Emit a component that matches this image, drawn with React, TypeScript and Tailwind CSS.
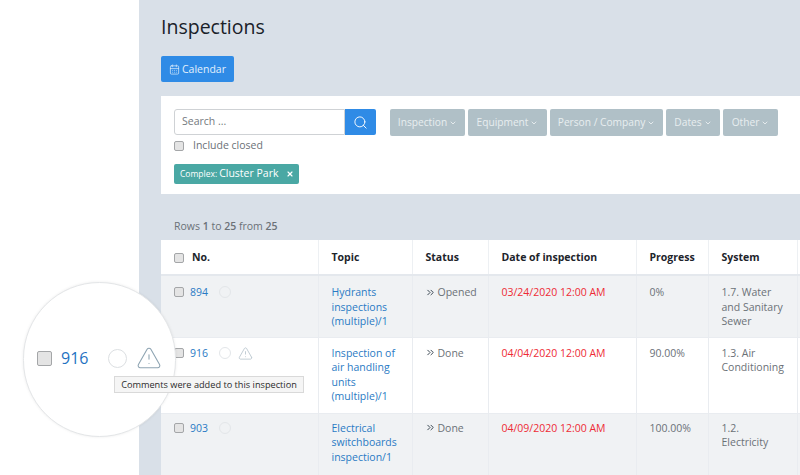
import React from 'react';
import { CalendarDays, ChevronDown, ChevronsRight, Search, TriangleAlert, X } from 'lucide-react';

const filters = [
  { label: 'Inspection', className: 'w-[75px]' },
  { label: 'Equipment', className: 'w-[79px]' },
  { label: 'Person / Company', className: 'w-[113px]' },
  { label: 'Dates', className: 'w-[54px]' },
  { label: 'Other', className: 'w-[55px]' },
];

const rows = [
  {
    no: '894',
    warn: false,
    topic: ['Hydrants', 'inspections', '(multiple)/1'],
    status: 'Opened',
    date: '03/24/2020 12:00 AM',
    progress: '0%',
    system: ['1.7. Water', 'and Sanitary', 'Sewer'],
    rowClass: 'bg-[#f0f2f4] h-[62px] [&>td]:pt-[9px]',
  },
  {
    no: '916',
    warn: true,
    topic: ['Inspection of', 'air handling', 'units', '(multiple)/1'],
    status: 'Done',
    date: '04/04/2020 12:00 AM',
    progress: '90.00%',
    system: ['1.3. Air', 'Conditioning'],
    rowClass: 'bg-white h-[76px] [&>td]:pt-[8px]',
  },
  {
    no: '903',
    warn: false,
    topic: ['Electrical', 'switchboards', 'inspection/1'],
    status: 'Done',
    date: '04/09/2020 12:00 AM',
    progress: '100.00%',
    system: ['1.2.', 'Electricity'],
    rowClass: 'bg-[#f0f2f4] h-[62px] [&>td]:pt-[7px]',
  },
];

const Check = ({ className }: { className: string }) => (
  <span className={`inline-block rounded-[2px] border border-[#a4a6a8] bg-[#e4e4e4] ${className}`} />
);

const Lines = ({ lines }: { lines: string[] }) => (
  <>
    {lines.map((l) => (
      <div key={l}>{l}</div>
    ))}
  </>
);

export default function App() {
  return (
    <div className="relative flex h-[475px] w-[800px] overflow-hidden bg-white font-['Open_Sans',sans-serif] text-[10.5px] text-[#6b7177]">
      <div className="w-[139px] shrink-0 bg-white" />

      <main className="min-w-0 flex-1 bg-[#d9e0e8] pl-[22px]">
        <h1 className="pt-[12px] text-[19.5px] leading-[30px] text-[#1a2129]">Inspections</h1>

        <button className="mt-[14px] flex h-[26px] w-[73px] items-center justify-center gap-[2px] rounded-[2px] bg-[#2f8be6] pt-[1px] text-[10.5px] text-[#e3f0fc]">
          <CalendarDays size={11} strokeWidth={1.5} />
          Calendar
        </button>

        <section className="mt-[14px] h-[98px] bg-white pl-[13px] pt-[13px]">
          <div className="flex">
            <div className="flex h-[26px] w-[202px]">
              <div className="flex w-[171px] items-center rounded-l-[3px] border border-[#cfd2d5] pl-[7px] text-[#74797e]">
                Search ...
              </div>
              <div className="flex w-[31px] items-center justify-center rounded-r-[2px] bg-[#2f8be6] text-white">
                <Search size={15} strokeWidth={1.5} />
              </div>
            </div>
            <div className="ml-[14px] flex gap-[3px]">
              {filters.map((f) => (
                <div
                  key={f.label}
                  className={`flex h-[27px] items-center justify-center gap-[2px] rounded-[2px] bg-[#b0c0c7] text-[10.2px] text-[#e8eef0] ${f.className}`}
                >
                  {f.label}
                  <ChevronDown size={8} strokeWidth={2} className="text-white" />
                </div>
              ))}
            </div>
          </div>

          <div className="mt-[3px] flex h-[14px] items-center">
            <Check className="h-[10px] w-[10px]" />
            <span className="ml-[9px]">Include closed</span>
          </div>

          <div className="mt-[11px] flex h-[20px] w-[125px] items-center whitespace-nowrap rounded-[2px] bg-[#4aa8a4] pl-[6px] text-white">
            <span className="text-[8.5px]">Complex:</span>
            <span className="ml-[2px] text-[10.5px]">Cluster Park</span>
            <X size={8} strokeWidth={3.5} className="ml-[8px]" />
          </div>
        </section>

        <div className="ml-[13px] mt-[24px] h-[16px] leading-[16px]">
          Rows <b className="font-semibold">1</b> to <b className="font-semibold">25</b> from{' '}
          <b className="font-semibold">25</b>
        </div>

        <table className="mt-[6px] w-[700px] table-fixed border-collapse">
          <colgroup>
            <col className="w-[157px]" />
            <col className="w-[94px]" />
            <col className="w-[76px]" />
            <col className="w-[148px]" />
            <col className="w-[72px]" />
            <col className="w-[89px]" />
            <col />
          </colgroup>
          <thead>
            <tr className="h-[35px] border-b-[2px] border-[#e4e8ed] bg-white text-left text-[10.5px] font-bold text-[#1d242b]">
              <th className="border-r border-[#edf0f3] pl-[13px] pt-[2px] font-bold">
                <span className="flex items-center">
                  <Check className="h-[10px] w-[10px]" />
                  <span className="ml-[8px]">No.</span>
                </span>
              </th>
              <th className="border-r border-[#edf0f3] pl-[13px] pt-[2px] font-bold">Topic</th>
              <th className="border-r border-[#edf0f3] pl-[13px] pt-[2px] font-bold">Status</th>
              <th className="border-r border-[#edf0f3] pl-[13px] pt-[2px] font-bold">Date of inspection</th>
              <th className="border-r border-[#edf0f3] pl-[13px] pt-[2px] font-bold">Progress</th>
              <th className="border-r border-[#edf0f3] pl-[13px] pt-[2px] font-bold">System</th>
              <th />
            </tr>
          </thead>
          <tbody>
            {rows.map((r) => (
              <tr key={r.no} className={`border-b border-[#e9ecf0] align-top leading-[14.6px] ${r.rowClass}`}>
                <td className="border-r border-[#e9ecf0] pl-[13px]">
                  <div className="flex items-center">
                    <Check className="h-[10px] w-[10px]" />
                    <a className="ml-[6px] w-[18px] text-[#2a7ac4]">{r.no}</a>
                    <span className="ml-[11px] h-[12px] w-[12px] rounded-full border border-[#e3e6e9]" />
                    {r.warn && <TriangleAlert size={15} strokeWidth={1} className="ml-[7px] text-[#9fb0bb]" />}
                  </div>
                </td>
                <td className="border-r border-[#e9ecf0] pl-[13px] text-[#2a7ac4]">
                  <Lines lines={r.topic} />
                </td>
                <td className="border-r border-[#e9ecf0] pl-[13px]">
                  <span className="flex items-center gap-[2px]">
                    <ChevronsRight size={11} strokeWidth={2} className="-ml-[1px] text-[#2e3b47]" />
                    {r.status}
                  </span>
                </td>
                <td className="border-r border-[#e9ecf0] pl-[13px] text-[#ee2b35]">{r.date}</td>
                <td className="border-r border-[#e9ecf0] pl-[13px]">{r.progress}</td>
                <td className="border-r border-[#e9ecf0] pl-[13px]">
                  <Lines lines={r.system} />
                </td>
                <td />
              </tr>
            ))}
          </tbody>
        </table>
      </main>

      {/* magnifier */}
      <div className="absolute left-[23px] top-[282px] flex h-[155px] w-[153px] items-center rounded-full border border-[#e4e6e8] bg-white pb-[1px] pl-[13px] shadow-[0_0_3px_rgba(0,0,0,0.08)]">
        <div className="flex -translate-y-[1px] items-center">
          <Check className="h-[15px] w-[15px] border-[#9d9f9f]" />
          <span className="ml-[9px] w-[30px] text-[16px] text-[#1f72c2]">916</span>
          <span className="ml-[17px] h-[19px] w-[19px] rounded-full border border-[#dcdfe2]" />
          <TriangleAlert size={26} strokeWidth={1} className="ml-[9px] text-[#8ea4b2]" />
        </div>
      </div>
      <div className="absolute left-[114px] top-[376px] flex h-[17px] w-[190px] items-center justify-center whitespace-nowrap border border-[#d9d9d9] bg-[#f5f5f5] text-[9.2px] text-[#2b2b2b]">
        Comments were added to this inspection
      </div>
    </div>
  );
}
